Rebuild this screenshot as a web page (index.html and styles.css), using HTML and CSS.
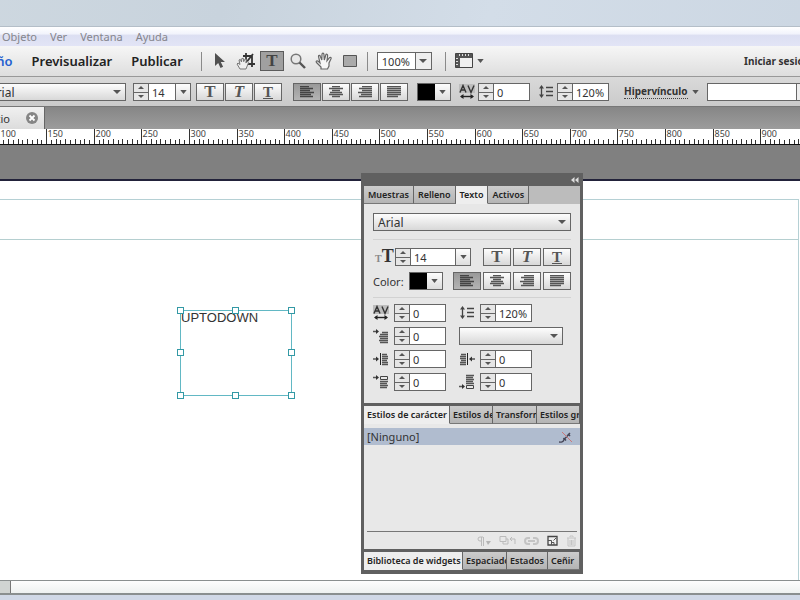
FILE: index.html
```html
<!DOCTYPE html>
<html lang="es">
<head>
    <meta charset="UTF-8">
    <title>Inicio</title>
    <link rel="stylesheet" href="styles.css">
</head>
<body>

    <!-- Icons shared by the control bar and the text panel -->
    <svg class="sprite" aria-hidden="true">
        <symbol id="i-left" viewBox="0 0 14 12"><path d="M0 .5h9M0 2.5h13M0 4.5h10M0 6.5h14M0 8.5h11M0 10.5h13" stroke="currentColor" stroke-width="1.3"/></symbol>
        <symbol id="i-center" viewBox="0 0 14 12"><path d="M3 .5h8M0 2.5h14M3 4.5h8M1 6.5h12M0 8.5h14M3 10.5h8" stroke="currentColor" stroke-width="1.3"/></symbol>
        <symbol id="i-right" viewBox="0 0 14 12"><path d="M4 .5h10M1 2.5h13M4 4.5h10M0 6.5h14M3 8.5h11M1 10.5h13" stroke="currentColor" stroke-width="1.3"/></symbol>
        <symbol id="i-justify" viewBox="0 0 14 12"><path d="M0 .5h14M0 2.5h14M0 4.5h14M0 6.5h14M0 8.5h14M0 10.5h11" stroke="currentColor" stroke-width="1.3"/></symbol>
        <symbol id="i-tracking" viewBox="0 0 16 16">
            <path d="M0 0h16v9H0z" fill="#bdbdbd"/>
            <path d="M1 8.5 4 1.5l3 7M2.2 6h3.6M9 1.5l3 7 3-7" fill="none" stroke="#333" stroke-width="1.4"/>
            <path d="M2 12.5h12" stroke="#222" stroke-width="1.4"/>
            <path d="M1 12.5 4.5 10v5zM15 12.5 11.5 10v5z" fill="#222"/>
        </symbol>
        <symbol id="i-leading" viewBox="0 0 16 16">
            <path d="M3.5 3v9M8 3.5h7M8 7.500h7M8 11.5h7" stroke="#444" stroke-width="1.3"/>
            <path d="M3.5 1 6 4.5H1zM3.5 14 6 10.5H1z" fill="#444"/>
        </symbol>
        <symbol id="i-indent" viewBox="0 0 16 16">
            <path d="M0 3.5h4M9 4.5h6M7 6.5h8M6 8.5h9M7 10.5h8M6 12.5h9M7 14.5h8" stroke="#555" stroke-width="1.3"/>
            <path d="M3 1v5l3-2.5z" fill="#333"/>
        </symbol>
        <symbol id="i-marginleft" viewBox="0 0 16 16">
            <path d="M0 8h4M9 3.5h5M9 5.5h6M9 7.5h6M9 9.5h5M9 11.5h6M9 13.5h6" stroke="#555" stroke-width="1.3"/>
            <path d="M3 5.5v5L6 8z" fill="#333"/><path d="M7.5 2v12" stroke="#222"/>
        </symbol>
        <symbol id="i-marginright" viewBox="0 0 16 16">
            <path d="M12 8h4M2 3.5h5M1 5.5h6M1 7.5h6M2 9.5h5M1 11.5h6M1 13.5h6" stroke="#555" stroke-width="1.3"/>
            <path d="M13 5.5v5L10 8z" fill="#333"/><path d="M8.5 2v12" stroke="#222"/>
        </symbol>
        <symbol id="i-before" viewBox="0 0 16 16">
            <path d="M0 3.5h4M7 7.5h8M7 9.5h7M7 11.5h8M7 13.5h7" stroke="#555" stroke-width="1.3"/>
            <path d="M3 1v5l3-2.5z" fill="#333"/><path d="M7.5 2.5h7v3h-7z" fill="none" stroke="#444"/>
        </symbol>
        <symbol id="i-after" viewBox="0 0 16 16">
            <path d="M0 12.5h4M7 1.5h8M7 3.5h7M7 5.5h8M7 7.5h7M7 9.5h8" stroke="#555" stroke-width="1.3"/>
            <path d="M3 10v5l3-2.5z" fill="#333"/><path d="M7.5 11.5h7v3h-7z" fill="none" stroke="#444"/>
        </symbol>
        <symbol id="i-down" viewBox="0 0 8 5"><path d="M0 0h8L4 5z" fill="#555"/></symbol>
    </svg>

    <div class="window">
        <header class="titlebar"></header>

        <nav class="menubar">
            <a href="#">Objeto</a>
            <a href="#">Ver</a>
            <a href="#">Ventana</a>
            <a href="#">Ayuda</a>
        </nav>

        <div class="toolbar">
            <nav class="modes">
                <a class="mode active" href="#">Diseño</a>
                <a class="mode" href="#">Previsualizar</a>
                <a class="mode" href="#">Publicar</a>
            </nav>
            <span class="separator"></span>
            <div class="tools">
                <button class="tool" aria-label="Selección">
                    <svg width="12" height="16" viewBox="0 0 12 16"><path d="M1 0v13l3.2-3 2.3 5 2.6-1.2-2.3-4.8H11z" fill="#505050"/></svg>
                </button>
                <button class="tool" aria-label="Recortar">
                    <svg width="20" height="18" viewBox="0 0 20 18">
                        <path d="M10 1v11h9M7 4h9v11M9 12l8-10" fill="none" stroke="#333" stroke-width="1.8"/>
                        <path d="M4 17 1 12l1-1 2 1.5L3 8l1.3-.6L5.5 10l.3-3.5 1.5-.2.4 3.4L9 7l1.4.6-.6 3.2 2-1.3.7 1.2L10 17z" fill="#eee" stroke="#777"/>
                    </svg>
                </button>
                <button class="tool pressed serif" aria-label="Texto">T</button>
                <button class="tool" aria-label="Zoom">
                    <svg width="16" height="16" viewBox="0 0 16 16"><circle cx="6" cy="6" r="4.8" fill="#e8e8e8" stroke="#777" stroke-width="1.5"/><path d="m9.5 9.5 5.5 5.5" stroke="#555" stroke-width="2.4"/></svg>
                </button>
                <button class="tool" aria-label="Mano">
                    <svg width="18" height="18" viewBox="0 0 18 18"><path d="M6 17v-2L1.500 10.500c-1-1.300.6-2.300 1.700-1.200L5 11 3.500 4.500c-.2-1.400 1.400-1.600 1.800-.3L6.800 8 7 2.200c.1-1.500 1.800-1.500 1.900 0L9.300 8l1.500-5c.4-1.300 2-.9 1.800.5L12 8.700l2.500-3c.9-1 2.200 0 1.500 1.100L14 11v3l-1.500 3z" fill="#f6f6f6" stroke="#666" stroke-width="1.2"/></svg>
                </button>
                <button class="tool" aria-label="Rectángulo">
                    <svg width="14" height="12" viewBox="0 0 14 12"><path d="M.5.5h13v11H.5z" fill="#aaa" stroke="#555"/></svg>
                </button>
            </div>
            <span class="separator"></span>
            <select class="field zoom" aria-label="Nivel de zoom"><option>100%</option></select>
            <span class="separator"></span>
            <button class="view-menu" aria-label="Opciones de vista">
                <svg width="18" height="16" viewBox="0 0 18 16">
                    <path d="M.5.5h17v14H.5z" fill="#555" stroke="#444"/>
                    <path d="M5 5h12v9H5z" fill="#f0f0f0"/>
                    <path d="M4.5 1v2M7.5 1v2M10.5 1v2M13.5 1v2M1 5.5h2M1 8.5h2M1 11.5h2" stroke="#ddd"/>
                </svg>
                <svg width="7" height="4"><use href="#i-down"/></svg>
            </button>
            <a class="login" href="#">Iniciar sesión</a>
        </div>

        <div class="controlbar">
            <select class="field font" aria-label="Fuente"><option>Arial</option></select>
            <div class="spinner">
                <div class="steps"><button aria-label="Aumentar"></button><button aria-label="Reducir"></button></div>
                <input type="text" value="14" aria-label="Tamaño">
                <button class="drop" aria-label="Tamaños"><svg width="7" height="4"><use href="#i-down"/></svg></button>
            </div>
            <div class="group">
                <button class="key serif" aria-label="Negrita">T</button>
                <button class="key serif italic" aria-label="Cursiva">T</button>
                <button class="key serif under" aria-label="Subrayado">T</button>
            </div>
            <div class="group aligns">
                <button class="key pressed" aria-label="Izquierda"><svg width="14" height="12"><use href="#i-left"/></svg></button>
                <button class="key" aria-label="Centro"><svg width="14" height="12"><use href="#i-center"/></svg></button>
                <button class="key" aria-label="Derecha"><svg width="14" height="12"><use href="#i-right"/></svg></button>
                <button class="key" aria-label="Justificar"><svg width="14" height="12"><use href="#i-justify"/></svg></button>
            </div>
            <button class="swatch" aria-label="Color"><span class="chip"></span><svg width="7" height="4"><use href="#i-down"/></svg></button>
            <div class="metric">
                <svg width="16" height="16"><use href="#i-tracking"/></svg>
                <div class="spinner wide">
                    <div class="steps"><button aria-label="Aumentar"></button><button aria-label="Reducir"></button></div>
                    <input type="text" value="0" aria-label="Espaciado entre letras">
                </div>
            </div>
            <div class="metric">
                <svg width="16" height="16"><use href="#i-leading"/></svg>
                <div class="spinner wide">
                    <div class="steps"><button aria-label="Aumentar"></button><button aria-label="Reducir"></button></div>
                    <input type="text" value="120%" aria-label="Interlineado">
                </div>
            </div>
            <button class="link-menu"><span>Hipervínculo</span><svg width="7" height="4"><use href="#i-down"/></svg></button>
            <select class="field url" aria-label="Destino del hipervínculo"><option></option></select>
        </div>

        <div class="doc-tabs">
            <div class="doc-tab">
                <span>Inicio</span>
                <button aria-label="Cerrar">
                    <svg width="12" height="12" viewBox="0 0 12 12"><circle cx="6" cy="6" r="6" fill="#858585"/><path d="m3.5 3.5 5 5m0-5-5 5" stroke="#fff" stroke-width="1.8"/></svg>
                </button>
            </div>
        </div>

        <svg class="ruler" id="ruler"></svg>

        <main class="workspace">
            <div class="canvas">
                <div class="page">
                    <div class="page-header"></div>
                </div>
                <div class="text-frame">
                    UPTODOWN
                    <i class="handle top start"></i><i class="handle top middle"></i><i class="handle top end"></i>
                    <i class="handle center start"></i><i class="handle center end"></i>
                    <i class="handle bottom start"></i><i class="handle bottom middle"></i><i class="handle bottom end"></i>
                </div>
            </div>

            <aside class="panel">
                <div class="panel-title">
                    <button aria-label="Contraer"><svg width="8" height="6" viewBox="0 0 8 6"><path d="M3.5 0v6L0 3zM7.5 0v6L4 3z" fill="#ddd"/></svg></button>
                </div>

                <div class="tabs">
                    <button class="tab">Muestras</button>
                    <button class="tab">Relleno</button>
                    <button class="tab active">Texto</button>
                    <button class="tab">Activos</button>
                </div>
                <div class="text-options">
                    <select class="field" aria-label="Fuente del texto"><option>Arial</option></select>
                    <hr>
                    <div class="row">
                        <span class="size-icon"><small>T</small>T</span>
                        <div class="spinner size">
                            <div class="steps"><button aria-label="Aumentar"></button><button aria-label="Reducir"></button></div>
                            <input type="text" value="14" aria-label="Tamaño del texto">
                            <button class="drop" aria-label="Tamaños"><svg width="7" height="4"><use href="#i-down"/></svg></button>
                        </div>
                        <div class="group">
                            <button class="key serif" aria-label="Negrita">T</button>
                            <button class="key serif italic" aria-label="Cursiva">T</button>
                            <button class="key serif under" aria-label="Subrayado">T</button>
                        </div>
                    </div>
                    <div class="row">
                        <label for="color">Color:</label>
                        <button class="swatch" id="color"><span class="chip"></span><svg width="7" height="4"><use href="#i-down"/></svg></button>
                        <div class="group">
                            <button class="key pressed" aria-label="Izquierda"><svg width="14" height="12"><use href="#i-left"/></svg></button>
                            <button class="key" aria-label="Centro"><svg width="14" height="12"><use href="#i-center"/></svg></button>
                            <button class="key" aria-label="Derecha"><svg width="14" height="12"><use href="#i-right"/></svg></button>
                            <button class="key" aria-label="Justificar"><svg width="14" height="12"><use href="#i-justify"/></svg></button>
                        </div>
                    </div>
                    <hr>
                    <div class="metrics">
                        <div class="metric">
                            <svg width="16" height="16"><use href="#i-tracking"/></svg>
                            <div class="spinner wide">
                                <div class="steps"><button aria-label="Aumentar"></button><button aria-label="Reducir"></button></div>
                                <input type="text" value="0" aria-label="Espaciado entre letras">
                            </div>
                        </div>
                        <div class="metric">
                            <svg width="16" height="16"><use href="#i-leading"/></svg>
                            <div class="spinner wide">
                                <div class="steps"><button aria-label="Aumentar"></button><button aria-label="Reducir"></button></div>
                                <input type="text" value="120%" aria-label="Interlineado">
                            </div>
                        </div>
                        <div class="metric">
                            <svg width="16" height="16"><use href="#i-indent"/></svg>
                            <div class="spinner wide">
                                <div class="steps"><button aria-label="Aumentar"></button><button aria-label="Reducir"></button></div>
                                <input type="text" value="0" aria-label="Sangría">
                            </div>
                        </div>
                        <select class="field" aria-label="Estilo"><option></option></select>
                        <div class="metric">
                            <svg width="16" height="16"><use href="#i-marginleft"/></svg>
                            <div class="spinner wide">
                                <div class="steps"><button aria-label="Aumentar"></button><button aria-label="Reducir"></button></div>
                                <input type="text" value="0" aria-label="Margen izquierdo">
                            </div>
                        </div>
                        <div class="metric">
                            <svg width="16" height="16"><use href="#i-marginright"/></svg>
                            <div class="spinner wide">
                                <div class="steps"><button aria-label="Aumentar"></button><button aria-label="Reducir"></button></div>
                                <input type="text" value="0" aria-label="Margen derecho">
                            </div>
                        </div>
                        <div class="metric">
                            <svg width="16" height="16"><use href="#i-before"/></svg>
                            <div class="spinner wide">
                                <div class="steps"><button aria-label="Aumentar"></button><button aria-label="Reducir"></button></div>
                                <input type="text" value="0" aria-label="Espacio anterior">
                            </div>
                        </div>
                        <div class="metric">
                            <svg width="16" height="16"><use href="#i-after"/></svg>
                            <div class="spinner wide">
                                <div class="steps"><button aria-label="Aumentar"></button><button aria-label="Reducir"></button></div>
                                <input type="text" value="0" aria-label="Espacio posterior">
                            </div>
                        </div>
                    </div>
                </div>

                <div class="tabs split styles-tabs">
                    <button class="tab active">Estilos de carácter</button>
                    <button class="tab">Estilos de párrafo</button>
                    <button class="tab">Transformar</button>
                    <button class="tab">Estilos gráficos</button>
                </div>
                <div class="styles">
                    <div class="style-row">
                        <span>[Ninguno]</span>
                        <svg width="14" height="12" viewBox="0 0 14 12">
                            <path d="M0 11c2 .5 4.500 0 5-2.500L11 2" fill="none" stroke="#445" stroke-width="1.3"/>
                            <path d="M4.500 7 7 9.500M9 3l2 2" stroke="#445" stroke-width="1.6"/>
                            <path d="m3 1 10 10" stroke="#c77"/>
                        </svg>
                    </div>
                    <div class="style-actions">
                        <button aria-label="Borrar modificaciones" disabled><svg width="14" height="12" viewBox="0 0 14 12"><path d="M6 2H3a2 2 0 0 0 0 4h1M4.5 2v9M6.5 2v9" fill="none" stroke="#bbb"/><path d="M9 6h5l-3 4z" fill="#b4b4b4"/></svg></button>
                        <button aria-label="Redefinir estilo" disabled><svg width="17" height="12" viewBox="0 0 17 12"><path d="M1 1.5h6v5H1zM4 6v3h5V4H7M16 9V4h-5M13 2l-2 2 2 2" fill="none" stroke="#bbb"/></svg></button>
                        <button aria-label="Desvincular estilo" disabled><svg width="15" height="12" viewBox="0 0 15 12"><path d="M6 3H4a3 3 0 0 0 0 6h2M9 3h2a3 3 0 0 1 0 6H9M4 6h7" fill="none" stroke="#c4c4c4" stroke-width="2"/></svg></button>
                        <button aria-label="Nuevo estilo"><svg width="11" height="11" viewBox="0 0 11 11"><path d="M1 1.5h9V10H1z" fill="#eee" stroke="#444" stroke-width="1.3"/><path d="M1 5.5h3.5V10M4 7.5h3V10M9 3 6.500 5.500" fill="none" stroke="#555"/></svg></button>
                        <button aria-label="Eliminar estilo" disabled><svg width="11" height="12" viewBox="0 0 11 12"><path d="M1 3h9M4 2V1h3v1M2 3v8h7V3M4 5v5M5.5 5v5M7 5v5" fill="none" stroke="#c4c4c4"/></svg></button>
                    </div>
                </div>

                <div class="tabs split library-tabs">
                    <button class="tab active">Biblioteca de widgets</button>
                    <button class="tab">Espaciado</button>
                    <button class="tab">Estados</button>
                    <button class="tab">Ceñir</button>
                </div>
            </aside>
        </main>

        <div class="scrollbar"><span class="scroll-end"></span></div>
        <footer class="frame-bottom"></footer>
    </div>

    <script>
        // Draws the ruler: a long tick and a number every 50 px, a short one every 5
        const ruler = document.getElementById('ruler');
        const step = 4.76;
        const start = 50;
        let marks = '';
        for (let i = 0; i * step < ruler.clientWidth - 48; i++) {
            const x = Math.round(i * step) - 0.5;
            const top = i % 10 === 0 ? 0 : (i % 2 === 0 ? 10 : 11);
            marks += `<path d="M${x} ${top}V15"/>`;
            // The first number lies outside the screen
            if (i % 10 === 0 && i > 0) {
                marks += `<text x="${x + 1}" y="8">${start + i * 5}</text>`;
            }
        }
        ruler.innerHTML = marks;
    </script>
</body>
</html>
```

FILE: styles.css
```css
* {
    box-sizing: border-box;
}

html,
body {
    margin: 0;
    height: 100%;
    overflow: hidden;
}

body {
    font-family: "Noto Sans", "Open Sans", sans-serif;
    font-size: 11px;
    color: #333;
}

button, input, select {
    font: inherit;
    color: inherit;
    margin: 0;
    padding: 0;
    border-radius: 0;
}

button {
    border: none;
    background: none;
}

svg {
    display: block;
    flex: none;
}

a {
    color: inherit;
    text-decoration: none;
}

.sprite {
    position: absolute;
    width: 0;
    height: 0;
}

/* The window is wider than the screen on both sides */
.window {
    display: flex;
    flex-direction: column;
    height: 100vh;
    margin: 0 -48px;
}

.titlebar {
    height: 27px;
    background: linear-gradient(100deg, #ced8e0, #c8d3dd 30%, #d3dde8 60%, #cbd6e2);
    border-bottom: 1px solid #b4bec8;
}

.menubar {
    display: flex;
    gap: 13px;
    height: 19px;
    padding-left: 50px;
    line-height: 20px;
    color: #85858d;
    background: linear-gradient(#fff, #f2f4fc 35%, #dcdff2 45%, #e2e4f6);
}

/* Toolbar */
.toolbar {
    display: flex;
    align-items: center;
    height: 31px;
    padding-left: 17px;
    background: linear-gradient(#f6f6f6, #dedede);
    border-bottom: 1px solid #999;
}

.modes {
    display: flex;
    gap: 19px;
    margin-right: 18px;
    font-size: 13px;
    font-weight: 600;
    color: #222;
}

.mode.active {
    color: #2460d0;
}

.separator {
    width: 1px;
    height: 19px;
    background: #8a8a8a;
}

.tools {
    display: flex;
    gap: 2px;
    margin: 0 5px 0 6px;
}

.tool {
    display: flex;
    align-items: center;
    justify-content: center;
    width: 24px;
    height: 20px;
}

.serif {
    font-family: "Liberation Serif", serif;
    font-size: 17px;
    font-weight: bold;
    line-height: 16px;
    color: #444;
}

.tool.pressed {
    background: #a0a0a0;
    border: 1px solid #5c5c5c;
}

.field {
    height: 18px;
    padding: 0 4px;
    border: 1px solid #666;
    appearance: none;
    font-size: 12px;
    background: url("data:image/svg+xml,%3Csvg xmlns='http://www.w3.org/2000/svg' width='8' height='4'%3E%3Cpath d='M0 0h8L4 4z' fill='%23555'/%3E%3C/svg%3E") right 4px center no-repeat, linear-gradient(#fdfdfd, #d8d8d8);
}

.zoom,
.url {
    font-size: 11px;
    background: url("data:image/svg+xml,%3Csvg xmlns='http://www.w3.org/2000/svg' width='16' height='18'%3E%3Cpath d='M0 0h16v18H0z' fill='%23eee'/%3E%3Cpath d='M.5 0v18' stroke='%23666'/%3E%3Cpath d='M4 7h8l-4 4z' fill='%23555'/%3E%3C/svg%3E") right center no-repeat, #fff;
}

.zoom {
    width: 55px;
    margin: 0 13px 0 9px;
}

.view-menu {
    display: flex;
    align-items: center;
    gap: 4px;
    margin-left: 9px;
}

.login {
    width: 104px;
    margin-left: auto;
    font-size: 10px;
    font-weight: bold;
}

/* Control bar */
.controlbar {
    display: flex;
    align-items: center;
    height: 30px;
    padding: 1px 0 0 32px;
    background: linear-gradient(#d9d9d9, #cbcbcb);
    border-bottom: 1px solid #777;
}

.font {
    width: 142px;
    margin-right: 7px;
}

.spinner {
    display: flex;
    width: 58px;
    height: 18px;
    border: 1px solid #666;
    background: #fff;
}

.spinner.wide {
    width: 52px;
}

.spinner.size {
    width: 76px;
}

.steps {
    display: flex;
    flex-direction: column;
    flex: none;
    width: 15px;
    border-right: 1px solid #666;
    background: #e6e6e6;
}

.steps button {
    flex: 1;
    background: url("data:image/svg+xml,%3Csvg xmlns='http://www.w3.org/2000/svg' width='6' height='3'%3E%3Cpath d='M0 3h6L3 0z' fill='%23555'/%3E%3C/svg%3E") center no-repeat;
}

.steps button + button {
    border-top: 1px solid #666;
    background-image: url("data:image/svg+xml,%3Csvg xmlns='http://www.w3.org/2000/svg' width='6' height='3'%3E%3Cpath d='M0 0h6L3 3z' fill='%23555'/%3E%3C/svg%3E");
}

.spinner input {
    flex: 1;
    min-width: 0;
    padding-left: 3px;
    border: none;
    background: #fff;
}

.drop {
    display: flex;
    align-items: center;
    justify-content: center;
    width: 15px;
    border-left: 1px solid #666;
    background: linear-gradient(#fdfdfd, #ddd);
}

.group {
    display: flex;
    gap: 2px;
    margin-left: auto;
}

.key {
    display: flex;
    align-items: center;
    justify-content: center;
    width: 28px;
    height: 18px;
    border: 1px solid #666;
    background: linear-gradient(#fdfdfd, #d8d8d8);
    color: #555;
}

.key.pressed {
    background: linear-gradient(#999, #b4b4b4);
    color: #444;
}

.key.italic {
    font-style: italic;
}

.key.under {
    font-size: 15px;
    text-decoration: underline;
}

.controlbar .group {
    gap: 1px;
    margin-left: 5px;
}

.controlbar .aligns {
    margin: 0 9px 0 11px;
}

.swatch {
    display: flex;
    align-items: center;
    gap: 4px;
    width: 34px;
    height: 18px;
    border: 1px solid #666;
    background: linear-gradient(#fdfdfd, #ddd);
}

.chip {
    width: 17px;
    height: 16px;
    background: #000;
}

.metric {
    display: flex;
    align-items: center;
    gap: 3px;
}

.controlbar .metric {
    margin-left: 8px;
}

.link-menu {
    display: flex;
    align-items: center;
    gap: 4px;
    margin: 0 8px 0 15px;
    font-size: 10px;
    font-weight: bold;
    line-height: 13px;
}

.link-menu span {
    border-bottom: 1px dotted #444;
}

.url {
    flex: 1;
    max-width: 106px;
}

/* Document tabs and ruler */
.doc-tabs {
    display: flex;
    height: 22px;
    background: linear-gradient(#868686, #9c9c9c);
}

.doc-tab {
    display: flex;
    align-items: center;
    justify-content: flex-end;
    gap: 16px;
    width: 93px;
    padding-right: 6px;
    border-right: 1px solid #666;
    background: linear-gradient(#f0f0f0, #dcdcdc);
}

.ruler {
    width: 100%;
    height: 16px;
    background: #fff;
    border-bottom: 1px solid #111;
    font-size: 9px;
    stroke: #333;
}

.ruler text {
    stroke: none;
    fill: #444;
}

/* Work area */
.workspace {
    position: relative;
    display: flex;
    flex: 1;
    min-height: 0;
    padding-top: 34px;
    background: #808080;
}

.canvas {
    position: relative;
    flex: 1;
    padding-top: 18px;
    border-top: 2px solid #22223a;
    background: #fff;
}

.page {
    height: 100%;
    margin-right: 49px;
    border: solid #b5d0d4;
    border-width: 1px 1px 0 0;
}

.page-header {
    height: 40px;
    border-bottom: 1px solid #b5cfd0;
}

.text-frame {
    position: absolute;
    left: 228px;
    top: 129px;
    width: 112px;
    height: 86px;
    border: 1px solid #62b8c4;
    font: 13px/14px "Liberation Sans", Arial, sans-serif;
}

.handle {
    position: absolute;
    width: 7px;
    height: 7px;
    border: 1px solid #3399a5;
    background: #fff;
}

.top { top: -4px; }
.center { top: 38px; }
.bottom { bottom: -4px; }
.start { left: -4px; }
.middle { left: 51px; }
.end { right: -4px; }

/* Floating panel */
.panel {
    position: absolute;
    left: 409px;
    top: 28px;
    width: 222px;
    padding: 0 3px 4px;
    background: #606060;
}

.panel-title {
    display: flex;
    justify-content: flex-end;
    height: 13px;
    padding-right: 1px;
}

.tabs {
    display: flex;
    height: 18px;
    background: #bcbcbc;
    font-size: 9px;
    font-weight: 600;
    color: #222;
}

.tab {
    padding: 0 4px;
    overflow: hidden;
    white-space: nowrap;
    text-align: left;
    border-right: 1px solid #666;
    border-bottom: 1px solid #777;
    background: linear-gradient(#ccc, #b4b4b4);
}

.tab.active {
    background: #eee;
    border-bottom-color: #eee;
}

.split {
    display: grid;
}

.split .tab {
    padding: 0 0 0 3px;
}

.styles-tabs {
    grid-template-columns: 86fr 43fr 44fr 43fr;
}

.library-tabs {
    grid-template-columns: 99fr 44fr 41fr 32fr;
}

.text-options {
    display: flex;
    flex-direction: column;
    padding: 9px 9px 12px;
    margin-bottom: 3px;
    background: #e7e7e7;
}

.text-options hr {
    width: 100%;
    height: 1px;
    margin: 8px 0;
    border: none;
    background: #d2d2d2;
}

.text-options .row + hr {
    margin: 7px 0 6px;
}

.row {
    display: flex;
    align-items: center;
    height: 18px;
}

.row + .row {
    margin-top: 6px;
}

.size-icon {
    width: 22px;
    padding-left: 2px;
    font: bold 18px/18px "Liberation Serif", serif;
}

.size-icon small {
    font-size: 10px;
    color: #888;
}

.row label {
    width: 36px;
}

.metrics {
    display: grid;
    grid-template-columns: 86px 104px;
    gap: 5px 0;
}

.metrics .metric {
    gap: 5px;
}

.styles {
    display: flex;
    flex-direction: column;
    height: 125px;
    padding-top: 4px;
    margin-bottom: 3px;
    background: #e8e8e8;
}

.style-row {
    display: flex;
    align-items: center;
    justify-content: space-between;
    height: 17px;
    padding: 0 7px 0 3px;
    background: #b0bccf;
}

.style-actions {
    display: flex;
    align-items: center;
    justify-content: flex-end;
    gap: 8px;
    height: 18px;
    margin: auto 3px 0;
    border-top: 1px solid #777;
}

/* Bottom of the window */
.scrollbar {
    height: 15px;
    border: solid #8a8f8f;
    border-width: 1px 0 2px;
    background: linear-gradient(#fdfdfd, #eef1f0);
}

.scroll-end {
    display: block;
    width: 59px;
    height: 100%;
    border-right: 1px solid #777;
    background: #d0d4d2;
}

.frame-bottom {
    height: 5px;
    background: #d0d8e6;
}
```
